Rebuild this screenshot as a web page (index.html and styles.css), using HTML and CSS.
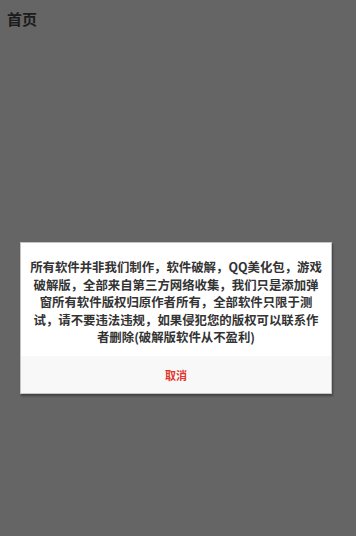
FILE: index.html
```html
<!DOCTYPE html>
<html lang="zh-CN">
<head>
    <meta charset="UTF-8">
    <meta name="viewport" content="width=device-width, initial-scale=1.0">
    <title>首页</title>
    <link rel="stylesheet" href="styles.css">
</head>
<body>
    <div class="page">
        <div class="title-bar">首页</div>
        <div class="overlay">
            <div class="dialog">
                <div class="dialog-message">所有软件并非我们制作，软件破解，QQ美化包，游戏<br>破解版，全部来自第三方网络收集，我们只是添加弹<br>窗所有软件版权归原作者所有，全部软件只限于测<br>试，请不要违法违规，如果侵犯您的版权可以联系作<br>者删除(破解版软件从不盈利)</div>
                <div class="dialog-actions">
                    <button class="btn-cancel">取消</button>
                </div>
            </div>
        </div>
    </div>
</body>
</html>
```

FILE: styles.css
```css
body, html {
    height: 100%;
    margin: 0;
    font-family: "Noto Sans CJK SC", "Noto Sans", sans-serif;
    background-color: #656565;
}
.page {
    height: 100%;
    display: flex;
    flex-direction: column;
}
.title-bar {
    padding: 9px 0 0 7px;
    height: 27px;
    font-size: 15px;
    font-weight: bold;
    color: #1c1c1c;
    line-height: 20px;
}
.overlay {
    flex: 1;
    display: flex;
    flex-direction: column;
    align-items: flex-start;
    padding: 206px 0 0 20px;
}
.dialog {
    width: 310px;
    background-color: #ffffff;
    border: 1px solid #c4c4c4;
    box-shadow: 1px 2px 2px rgba(0, 0, 0, 0.35);
}
.dialog-message {
    padding: 16px 0 9px;
    height: 88px;
    font-size: 12.4px;
    line-height: 17.5px;
    font-weight: bold;
    color: #333333;
    text-align: center;
    white-space: nowrap;
}
.dialog-actions {
    height: 37px;
    background-color: #f8f8f8;
    display: flex;
    align-items: center;
    justify-content: center;
}
.btn-cancel {
    border: none;
    background: none;
    padding: 0;
    font-family: inherit;
    font-size: 11px;
    font-weight: bold;
    color: #e2332c;
    cursor: pointer;
}
```
